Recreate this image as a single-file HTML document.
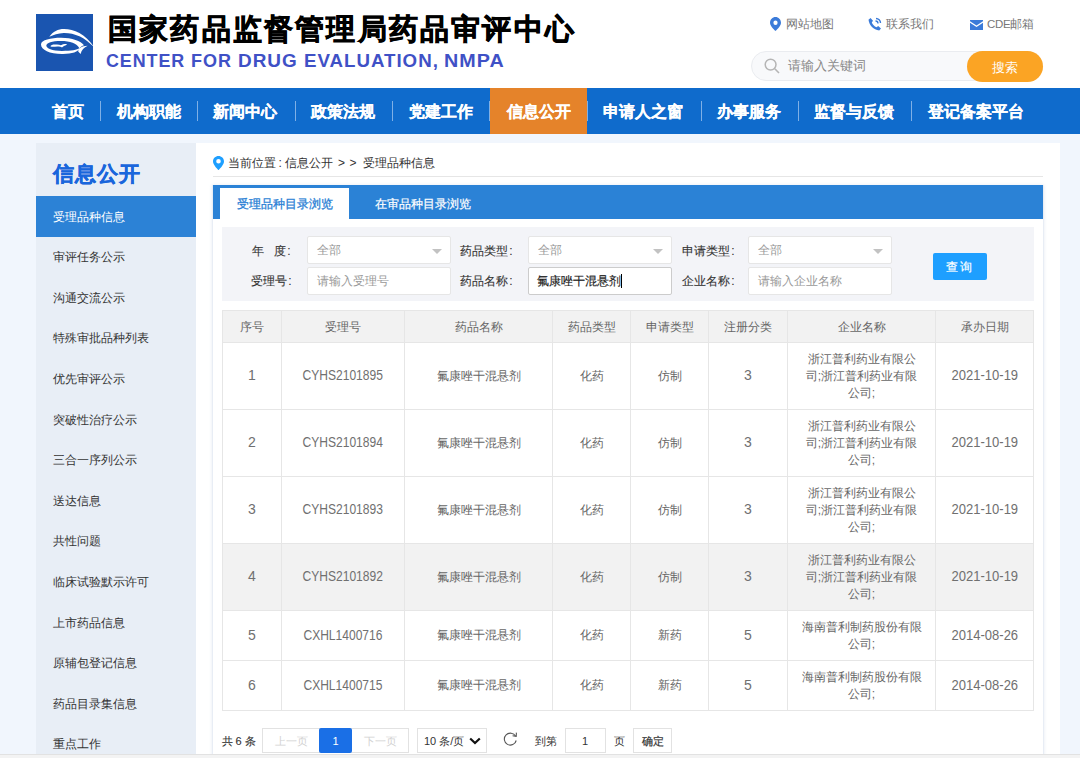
<!DOCTYPE html>
<html><head><meta charset="utf-8">
<style>
*{box-sizing:border-box;margin:0;padding:0}
html,body{width:1080px;height:758px;overflow:hidden}
body{font-family:"Liberation Sans",sans-serif;background:#f1f6fd;position:relative;color:#333;font-size:12px}
.abs{position:absolute}
#hdr{position:absolute;left:0;top:0;width:1080px;height:88px;background:#fff}
#logo{left:36px;top:14px;width:57px;height:57px;background:#1a55b0}
#title{left:108px;top:10px;font-size:29px;font-weight:bold;color:#000;white-space:nowrap;line-height:38px;letter-spacing:2.2px;-webkit-text-stroke:0.7px #000}
.sub{top:50.3px;font-size:19px;font-weight:bold;color:#3f51c6;white-space:nowrap;letter-spacing:1px;transform-origin:0 0}
.tl{font-size:11.7px;color:#777;white-space:nowrap;line-height:14px;top:17px}
#search{left:751px;top:51px;width:292px;height:30px;border:1px solid #eaecf0;border-radius:15px;background:#f8f9fb}
#sbtn{left:967px;top:51px;width:76px;height:31px;border-radius:15.5px;background:#fba424;color:#fff;font-size:13px;text-align:center;line-height:33px}
#nav{left:0;top:88px;width:1080px;height:46px;background:#0f6bcc}
.ni{position:absolute;top:0;height:46px;line-height:46px;color:#fff;font-size:16.4px;font-weight:bold;white-space:nowrap;-webkit-text-stroke:0.15px #fff}
.sep{position:absolute;top:13px;width:1px;height:20px;background:#7fb0e6}
#side{left:36px;top:143px;width:160px;height:611px;background:#e8eef6}
#side .st{position:absolute;left:17px;top:18px;letter-spacing:1px;-webkit-text-stroke:0.4px #1a66dc;font-size:20.5px;font-weight:bold;color:#1a66dc;line-height:26px;white-space:nowrap}
.si{position:absolute;left:0;width:160px;height:41px;line-height:41px;padding-left:17px;font-size:12px;color:#333;white-space:nowrap}
.si.on{background:#2c82d6;color:#fff;line-height:42px}
#panel{left:196px;top:143px;width:864px;height:611px;background:#fff}
#bc{left:228px;top:155px;font-size:12px;line-height:16px;color:#333;white-space:nowrap}
.bcx{top:155px;font-size:12px;line-height:16px;color:#333;white-space:nowrap}
#bcline{left:213px;top:176px;width:830px;height:1px;background:#e6e6e6}
#tabs{left:213px;top:185px;width:830px;height:34px;background:#2b82d6}
#tab1{left:220px;top:188px;width:129px;height:31px;background:#fff;color:#2a7fd5;text-align:center;line-height:32px;font-size:12px;-webkit-text-stroke:0.3px #2a7fd5}
#tab2{left:358px;top:188px;width:129px;height:31px;color:#fff;text-align:center;line-height:32px;font-size:12px;-webkit-text-stroke:0.2px #fff}
#tabbody{left:212px;top:185px;width:832px;height:580px;border:1px solid #e8edf5;border-top:none;box-shadow:0 0 3px rgba(210,220,235,0.6)}
#filter{left:222px;top:227px;width:812px;height:74px;background:#f3f4f8}
.lbl{position:absolute;font-size:12px;color:#333;line-height:16px;white-space:nowrap;-webkit-text-stroke:0.1px #333}
.inp{position:absolute;width:144px;height:28px;background:#fff;border:1px solid #e6e6e6;border-radius:2px;font-size:12px;color:#999;line-height:26px;padding-left:9px;white-space:nowrap}
.inp .arr{position:absolute;right:8px;top:11.5px;width:0;height:0;border-left:5.5px solid transparent;border-right:5.5px solid transparent;border-top:5px solid #c2c2c2}
#qbtn{left:933px;top:253px;width:54px;height:27px;background:#1e9fff;color:#fff;font-size:12px;text-align:center;line-height:28px;border-radius:2px;letter-spacing:2px;-webkit-text-stroke:0.2px #fff}
table{position:absolute;left:222px;top:310px;border-collapse:collapse;table-layout:fixed;width:811px}
td,th{border:1px solid #e6e6e6;text-align:center;font-size:12px;color:#666;font-weight:normal;padding:0 4px;line-height:17px}
td.e{padding:0 12.5px}
th{background:#f2f2f2;height:32px;padding-top:1px}
tr.r3 td{height:67px}
tr.r2 td{height:50px}
tr.hov td{background:#f2f2f2}
td.n{font-size:14px}
.dc,.dd,.dn{display:inline-block;position:relative;top:-0.5px;color:#707070}
.dc{transform:scaleX(0.86)}
.dd{transform:scaleX(0.93)}
#pg{left:222px;top:728px}
.pbox{position:absolute;height:25px;border:1px solid #e2e2e2;background:#fff;font-size:12px;line-height:23px;text-align:center;white-space:nowrap}
.pt{font-size:11px;line-height:16px;white-space:nowrap;color:#333}
#bottom{left:0;top:754px;width:1080px;height:4px;background:#f3f3f3;border-top:1px solid #e2e2e2}
</style></head>
<body>
<div id="hdr"></div>
<div id="logo" class="abs">
<svg width="57" height="57" viewBox="0 0 57 57" style="overflow:visible;position:absolute;left:0;top:0">
<path d="M13.3 22.8 C17 17.5 22 15 28 15 C38 15 49 19.5 58.5 33.5 C53 28.5 49 25 44 22.6 C38 19.8 33 18.9 27.8 19 C22 19.2 17.5 20.8 13.3 22.8 Z" fill="#fff"/>
<path d="M5 30.5 C5 26 15 23.8 25 23.8 C36 23.8 45 27 48 31.3 C46 32 44.5 33 43.8 34 C42.5 38 36 39.8 27 40 C14 40.2 5 36 5 30.5 Z M10.3 31.6 C10.3 34.6 16 37 26 37 C35 37 41.5 36 43.3 34.1 C41 29.5 34 27 25 27 C16 27 10.3 29 10.3 31.6 Z" fill="#fff" fill-rule="evenodd"/>
<path d="M42.2 37.6 C42.4 34 45.5 32 51.7 31.8 C48 33.5 45.5 36 44.6 40 Z" fill="#fff"/>
<path d="M14.4 32.2 C15 30.5 18 30.2 21 30.6 C23 30.9 24.5 31.3 25.5 31.1 C27 30 29.5 29.8 31.1 30.6 C29.5 31.5 27.5 32.2 26 33.4 C25 32.6 23.5 32.4 21.5 32.4 C18.5 32.4 16 33.2 14.4 32.2 Z" fill="#fff"/>
</svg>
</div>
<div id="title" class="abs">国家药品监督管理局药品审评中心</div>
<div class="abs sub" style="left:106.3px;transform:scaleX(0.9415)">CENTER</div><div class="abs sub" style="left:191.3px;transform:scaleX(0.949)">FOR</div><div class="abs sub" style="left:238px;transform:scaleX(0.9966)">DRUG</div><div class="abs sub" style="left:304.3px;transform:scaleX(0.9843)">EVALUATION,</div><div class="abs sub" style="left:444.2px;transform:scaleX(1.0376)">NMPA</div>

<svg class="abs" style="left:769.5px;top:17px" width="11" height="14" viewBox="0 0 12 14" preserveAspectRatio="none"><path d="M6 0 C2.7 0 0 2.6 0 5.8 C0 9.5 6 14 6 14 C6 14 12 9.5 12 5.8 C12 2.6 9.3 0 6 0 Z M6 3.5 A2.3 2.3 0 1 1 6 8.1 A2.3 2.3 0 1 1 6 3.5 Z" fill="#3b7bd9" fill-rule="evenodd"/></svg>
<div class="abs tl" style="left:786px">网站地图</div>
<svg class="abs" style="left:868px;top:17px" width="14" height="14" viewBox="0 0 14 14"><path d="M2.5 1 L5 3.8 L3.8 5.5 C4.6 7.6 6.4 9.4 8.5 10.2 L10.2 9 L13 11.5 L11.2 13.5 C5.5 12.8 1.2 8.5 0.5 2.8 Z" fill="#3b7bd9"/><path d="M8 1.5 A4.5 4.5 0 0 1 12.5 6" stroke="#3b7bd9" stroke-width="1.4" fill="none"/><path d="M7.5 4 A2.5 2.5 0 0 1 10 6.5" stroke="#3b7bd9" stroke-width="1.3" fill="none"/></svg>
<div class="abs tl" style="left:886px">联系我们</div>
<svg class="abs" style="left:970px;top:20px" width="13" height="10" viewBox="0 0 13 10"><path d="M0 0 H13 V1.2 L6.5 5.5 L0 1.2 Z" fill="#3b7bd9"/><path d="M0 2.8 L6.5 7 L13 2.8 V10 H0 Z" fill="#3b7bd9"/></svg>
<div class="abs tl" style="left:987px"><span style="font-size:11.5px;letter-spacing:-0.3px">CDE</span>邮箱</div>

<div id="search" class="abs"></div>
<svg class="abs" style="left:764px;top:58px" width="17" height="17" viewBox="0 0 17 17"><circle cx="6.6" cy="6.6" r="5.4" stroke="#b5b5b5" stroke-width="1.5" fill="none"/><path d="M10.8 10.8 L15 15" stroke="#b5b5b5" stroke-width="1.6"/></svg>
<div class="abs" style="left:788px;top:58px;font-size:13px;color:#888;line-height:16px;white-space:nowrap">请输入关键词</div>
<div id="sbtn" class="abs">搜索</div>

<div id="nav" class="abs">
<div class="ni" style="left:52px">首页</div><div class="sep" style="left:100px"></div>
<div class="ni" style="left:117px">机构职能</div><div class="sep" style="left:197px"></div>
<div class="ni" style="left:213px">新闻中心</div><div class="sep" style="left:295px"></div>
<div class="ni" style="left:311px">政策法规</div><div class="sep" style="left:392px"></div>
<div class="ni" style="left:409px">党建工作</div><div class="sep" style="left:489px"></div>
<div style="position:absolute;left:490px;top:0;width:97px;height:46px;background:#e5832a"></div>
<div class="ni" style="left:506.5px">信息公开</div><div class="sep" style="left:587px"></div>
<div class="ni" style="left:603px">申请人之窗</div><div class="sep" style="left:701px"></div>
<div class="ni" style="left:717px">办事服务</div><div class="sep" style="left:798px"></div>
<div class="ni" style="left:814px">监督与反馈</div><div class="sep" style="left:911px"></div>
<div class="ni" style="left:928px">登记备案平台</div>
</div>

<div id="side" class="abs">
<div class="st">信息公开</div>
<div class="si on" style="top:53px">受理品种信息</div>
<div class="si" style="top:94.1px">审评任务公示</div>
<div class="si" style="top:134.7px">沟通交流公示</div>
<div class="si" style="top:175.3px">特殊审批品种列表</div>
<div class="si" style="top:215.9px">优先审评公示</div>
<div class="si" style="top:256.5px">突破性治疗公示</div>
<div class="si" style="top:297.1px">三合一序列公示</div>
<div class="si" style="top:337.7px">送达信息</div>
<div class="si" style="top:378.3px">共性问题</div>
<div class="si" style="top:418.9px">临床试验默示许可</div>
<div class="si" style="top:459.5px">上市药品信息</div>
<div class="si" style="top:500.1px">原辅包登记信息</div>
<div class="si" style="top:540.7px">药品目录集信息</div>
<div class="si" style="top:581.3px">重点工作</div>
</div>

<div id="panel" class="abs"></div>
<svg class="abs" style="left:213px;top:156px" width="11" height="14" viewBox="0 0 11 14"><path d="M5.5 0 C2.5 0 0 2.4 0 5.4 C0 9 5.5 14 5.5 14 C5.5 14 11 9 11 5.4 C11 2.4 8.5 0 5.5 0 Z M5.5 3 A2.3 2.3 0 1 1 5.5 7.6 A2.3 2.3 0 1 1 5.5 3 Z" fill="#1e9fff" fill-rule="evenodd"/></svg>
<div id="bc" class="abs">当前位置</div><div class="abs bcx" style="left:278.5px">:</div><div class="abs bcx" style="left:284.5px">信息公开</div><div class="abs bcx" style="left:338px">&gt;</div><div class="abs bcx" style="left:349.5px">&gt;</div><div class="abs bcx" style="left:362.5px">受理品种信息</div>
<div id="bcline" class="abs"></div>
<div id="tabs" class="abs"></div>
<div id="tab1" class="abs">受理品种目录浏览</div>
<div id="tab2" class="abs">在审品种目录浏览</div>
<div id="tabbody" class="abs"></div>
<div id="filter" class="abs"></div>

<div class="lbl" style="left:251.7px;top:243px">年&nbsp;&nbsp;&nbsp;度<span style="margin-left:1.5px">:</span></div>
<div class="inp" style="left:307px;top:236px">全部<span class="arr"></span></div>
<div class="lbl" style="left:459.7px;top:243px">药品类型<span style="margin-left:1.5px">:</span></div>
<div class="inp" style="left:527.5px;top:236px">全部<span class="arr"></span></div>
<div class="lbl" style="left:681.7px;top:243px">申请类型<span style="margin-left:1.5px">:</span></div>
<div class="inp" style="left:748px;top:236px">全部<span class="arr"></span></div>

<div class="lbl" style="left:250.7px;top:273px">受理号<span style="margin-left:1.5px">:</span></div>
<div class="inp" style="left:307px;top:267px">请输入受理号</div>
<div class="lbl" style="left:459.7px;top:273px">药品名称<span style="margin-left:1.5px">:</span></div>
<div class="inp" style="left:527.5px;top:266.5px;color:#222;border-color:#ccc;padding-left:8px;-webkit-text-stroke:0.15px #222">氟康唑干混悬剂<span style="display:inline-block;width:1px;height:14px;background:#000;vertical-align:middle"></span></div>
<div class="lbl" style="left:681.7px;top:273px">企业名称<span style="margin-left:1.5px">:</span></div>
<div class="inp" style="left:748px;top:267px">请输入企业名称</div>
<div id="qbtn" class="abs">查询</div>

<table>
<colgroup><col style="width:59px"><col style="width:123px"><col style="width:148px"><col style="width:78px"><col style="width:78px"><col style="width:79px"><col style="width:148px"><col style="width:98px"></colgroup>
<tr><th>序号</th><th>受理号</th><th>药品名称</th><th>药品类型</th><th>申请类型</th><th>注册分类</th><th>企业名称</th><th>承办日期</th></tr>
<tr class="r3"><td class="n"><span class="dn">1</span></td><td class="n"><span class="dc">CYHS2101895</span></td><td>氟康唑干混悬剂</td><td>化药</td><td>仿制</td><td class="n"><span class="dn">3</span></td><td class="e">浙江普利药业有限公司;浙江普利药业有限公司;</td><td class="n"><span class="dd">2021-10-19</span></td></tr>
<tr class="r3"><td class="n"><span class="dn">2</span></td><td class="n"><span class="dc">CYHS2101894</span></td><td>氟康唑干混悬剂</td><td>化药</td><td>仿制</td><td class="n"><span class="dn">3</span></td><td class="e">浙江普利药业有限公司;浙江普利药业有限公司;</td><td class="n"><span class="dd">2021-10-19</span></td></tr>
<tr class="r3"><td class="n"><span class="dn">3</span></td><td class="n"><span class="dc">CYHS2101893</span></td><td>氟康唑干混悬剂</td><td>化药</td><td>仿制</td><td class="n"><span class="dn">3</span></td><td class="e">浙江普利药业有限公司;浙江普利药业有限公司;</td><td class="n"><span class="dd">2021-10-19</span></td></tr>
<tr class="r3 hov"><td class="n"><span class="dn">4</span></td><td class="n"><span class="dc">CYHS2101892</span></td><td>氟康唑干混悬剂</td><td>化药</td><td>仿制</td><td class="n"><span class="dn">3</span></td><td class="e">浙江普利药业有限公司;浙江普利药业有限公司;</td><td class="n"><span class="dd">2021-10-19</span></td></tr>
<tr class="r2"><td class="n"><span class="dn">5</span></td><td class="n"><span class="dc">CXHL1400716</span></td><td>氟康唑干混悬剂</td><td>化药</td><td>新药</td><td class="n"><span class="dn">5</span></td><td class="e">海南普利制药股份有限公司;</td><td class="n"><span class="dd">2014-08-26</span></td></tr>
<tr class="r2"><td class="n"><span class="dn">6</span></td><td class="n"><span class="dc">CXHL1400715</span></td><td>氟康唑干混悬剂</td><td>化药</td><td>新药</td><td class="n"><span class="dn">5</span></td><td class="e">海南普利制药股份有限公司;</td><td class="n"><span class="dd">2014-08-26</span></td></tr>
</table>

<div class="abs pt" style="left:221.5px;top:733px;-webkit-text-stroke:0.1px #333">共 6 条</div>
<div class="pbox" style="left:262px;top:727.5px;width:147px"></div>
<div class="abs pt" style="left:263px;top:733px;width:56px;text-align:center;color:#d2d2d2">上一页</div>
<div class="abs" style="left:319px;top:727.5px;width:33px;height:25px;line-height:27px;text-align:center;color:#fff;background:#1a6fe6;font-size:11px;border-radius:2px">1</div>
<div class="abs pt" style="left:352px;top:733px;width:56px;text-align:center;color:#d2d2d2">下一页</div>
<div class="pbox" style="left:416.5px;top:727.5px;width:70px"></div>
<div class="abs pt" style="left:424px;top:733px;color:#333">10 条/页</div>
<svg class="abs" style="left:469px;top:737px" width="12" height="8" viewBox="0 0 12 8"><path d="M1.2 1.5 L6 6 L10.8 1.5" stroke="#111" stroke-width="2.2" fill="none"/></svg>
<svg class="abs" style="left:502px;top:731.3px" width="16" height="16" viewBox="0 0 16 16"><path d="M13.6 5.2 A6 6 0 1 0 14.2 9.5" stroke="#555" stroke-width="1.1" fill="none"/><path d="M10.6 4.8 L14.2 5.3 L14.4 1.6" stroke="#555" stroke-width="1.1" fill="none"/></svg>
<div class="abs pt" style="left:535px;top:733px;color:#333">到第</div>
<div class="pbox" style="left:564.5px;top:727.5px;width:41px;color:#333;font-size:11px;line-height:24px">1</div>
<div class="abs pt" style="left:614px;top:733px;color:#333">页</div>
<div class="pbox" style="left:633px;top:727.5px;width:39px;color:#333;font-size:11px;line-height:25px;-webkit-text-stroke:0.2px #333">确定</div>

<div id="bottom" class="abs"></div>
</body></html>
